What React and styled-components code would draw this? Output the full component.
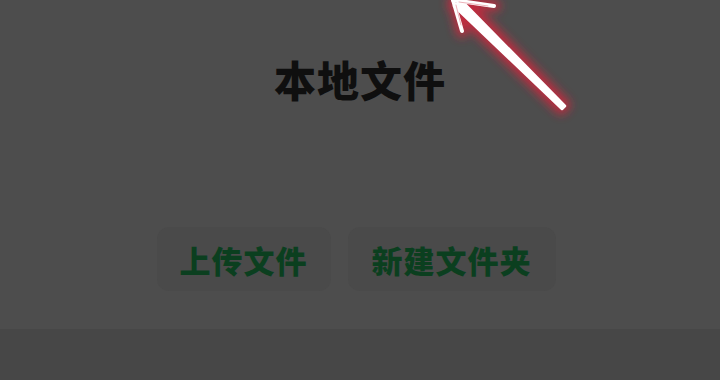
import React from "react";
import styled, { createGlobalStyle } from "styled-components";

const Global = createGlobalStyle`
  html, body { margin: 0; padding: 0; background: #4d4d4d; }
  body { font-family: "Noto Sans CJK SC", "Noto Sans", sans-serif; }
`;

const Page = styled.div`
  position: relative;
  width: 720px;
  height: 380px;
  overflow: hidden;
  display: flex;
  flex-direction: column;
  background: #4d4d4d;
`;

const Main = styled.div`
  height: 329px;
  display: flex;
  flex-direction: column;
  align-items: center;
`;

const Title = styled.h1`
  margin: 49px 0 0 0;
  font-size: 42px;
  line-height: 60px;
  font-weight: 900;
  color: #0f0f0f;
  letter-spacing: 1px;
`;

const Actions = styled.div`
  margin-top: 118px;
  display: flex;
  gap: 17px;
  margin-left: -8px;
`;

const ActionButton = styled.button`
  height: 64px;
  padding: 0;
  border: none;
  border-radius: 12px;
  background: #4a4a4a;
  color: #0b3f1f;
  font-family: "Noto Sans CJK SC", sans-serif;
  font-size: 31px;
  font-weight: 900;
  letter-spacing: 1px;
  width: ${(p) => p.$w}px;
`;

const Bottom = styled.div`
  flex: 1;
  background: #474747;
`;

const Overlay = styled.svg`
  position: absolute;
  left: 0;
  top: 0;
  pointer-events: none;
`;

export default function App() {
  return (
    <Page>
      <Global />
      <Main>
        <Title>本地文件</Title>
        <Actions>
          <ActionButton $w={174}>上传文件</ActionButton>
          <ActionButton $w={208}>新建文件夹</ActionButton>
        </Actions>
      </Main>
      <Bottom />
      <Overlay width="720" height="380" viewBox="0 0 720 380">
        <defs>
          <filter id="glow" x="-50%" y="-50%" width="200%" height="200%">
            <feGaussianBlur stdDeviation="5" />
          </filter>
        </defs>
        <g fill="#d3283c" stroke="#d3283c" strokeLinecap="round" strokeLinejoin="round" filter="url(#glow)" opacity="0.85">
          <polygon points="561,110 566,105 462,-2 452,6" strokeWidth="9" />
          <line x1="454" y1="0" x2="462" y2="32" strokeWidth="11" />
          <line x1="454" y1="0" x2="495" y2="6" strokeWidth="11" />
        </g>
        <g fill="#ffffff" stroke="#ffffff" strokeLinecap="round" strokeLinejoin="round">
          <polygon points="562,109 565,106 461,0 454,6" strokeWidth="2.5" />
          <line x1="453" y1="0" x2="462" y2="31" strokeWidth="4" />
          <line x1="453" y1="0" x2="494" y2="6" strokeWidth="4" />
        </g>
        <g stroke="#e8a0a8" strokeLinecap="round" fill="none" opacity="0.8">
          <line x1="456" y1="5" x2="461" y2="25" strokeWidth="1" />
          <line x1="459" y1="2" x2="488" y2="6" strokeWidth="1" />
        </g>
      </Overlay>
    </Page>
  );
}
